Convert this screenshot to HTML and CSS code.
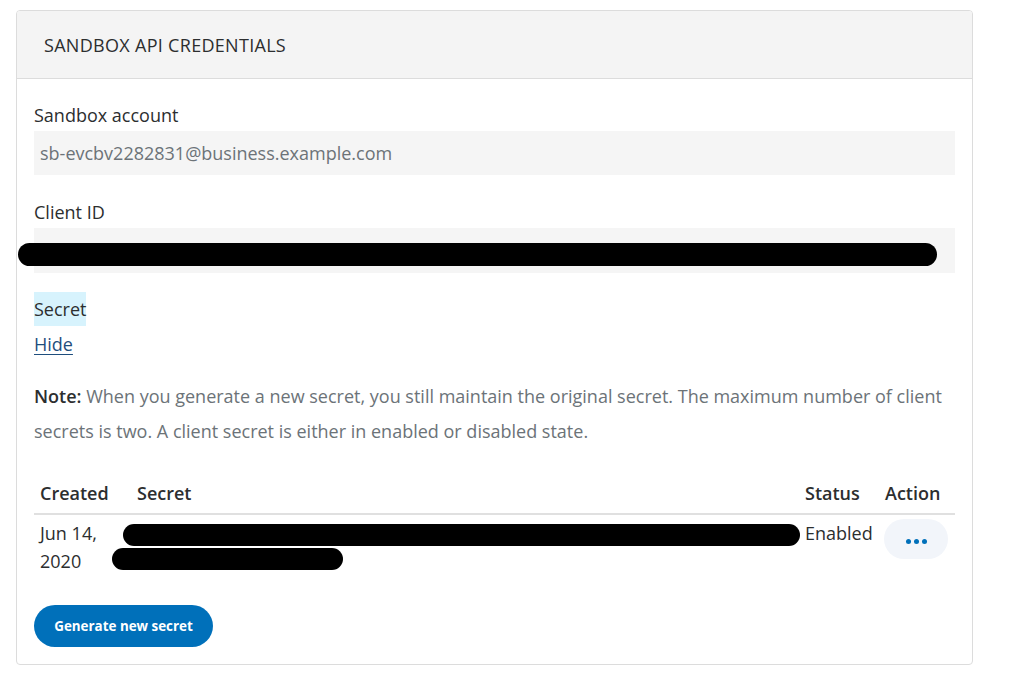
FILE: index.html
```html
<!DOCTYPE html>
<html lang="en">
<head>
<meta charset="utf-8">
<title>Sandbox API Credentials</title>
<link rel="stylesheet" href="styles.css">
</head>
<body>
<section class="card">
  <header class="card-header">SANDBOX API CREDENTIALS</header>
  <div class="card-body">
    <div class="field">
      <div class="label">Sandbox account</div>
      <div class="value">sb-evcbv2282831@business.example.com</div>
    </div>
    <div class="field client-field">
      <div class="label">Client ID</div>
      <div class="value redacted-box">
        <span class="redact redact-client"></span>
      </div>
    </div>
    <div class="field secret-field">
      <div class="label"><span class="label-hl">Secret</span></div>
      <a class="hide-link" href="#">Hide</a>
    </div>
    <p class="note"><strong class="note-lead">Note:</strong><span class="note-text"> When you generate a new secret, you still maintain the original secret. The maximum number of client secrets is two. A client secret is either in enabled or disabled state.</span></p>
    <table class="secrets">
      <thead>
        <tr>
          <th class="c-created">Created</th>
          <th class="c-secret">Secret</th>
          <th class="c-status">Status</th>
          <th class="c-action">Action</th>
        </tr>
      </thead>
      <tbody>
        <tr>
          <td class="c-created">Jun 14,<br>2020</td>
          <td class="c-secret"><span class="redact redact-s1"></span><span class="redact redact-s2"></span></td>
          <td class="c-status">Enabled</td>
          <td class="c-action"><button class="more" type="button" aria-label="More actions"><span class="dot"></span><span class="dot"></span><span class="dot"></span></button></td>
        </tr>
      </tbody>
    </table>
    <button class="primary" type="button">Generate new secret</button>
  </div>
</section>
</body>
</html>
```
FILE: styles.css
```css
html, body {
  margin: 0;
  padding: 0;
  background: #ffffff;
}
body {
  font-family: "Open Sans", "Liberation Sans", sans-serif;
  color: #2c2e2f;
  padding: 10px 0 0 16px;
}
.card {
  width: 957px;
  height: 655px;
  box-sizing: border-box;
  border: 1px solid #dcdcdc;
  border-radius: 4px;
  overflow: hidden;
}
.card-header {
  height: 68px;
  box-sizing: border-box;
  background: #f4f4f4;
  border-bottom: 1px solid #dcdcdc;
  padding-left: 27px;
  display: flex;
  align-items: center;
  font-size: 18px;
  letter-spacing: 0.3px;
  color: #2c2e2f;
}
.card-body {
  padding: 22px 17px 0 17px;
}
.field {
  margin: 0;
}
.client-field {
  margin-top: 23px;
}
.secret-field {
  margin-top: 19px;
}
.label {
  font-size: 18px;
  line-height: 28px;
  margin-bottom: 2px;
}
.value {
  height: 44px;
  background: #f5f5f5;
  font-size: 18px;
  line-height: 44px;
  padding-left: 6px;
  color: #6c7378;
}
.redacted-box {
  position: relative;
  height: 45px;
}
.redact {
  position: absolute;
  background: #000;
  border-radius: 12px;
  height: 23px;
}
.redact-client {
  left: -16px;
  top: 15px;
  width: 919px;
}
.secret-field .label {
  line-height: 34px;
  margin-bottom: 6px;
}
.label-hl {
  display: inline-block;
  background: #d7f3fd;
  line-height: 34px;
}
.hide-link {
  display: inline-block;
  font-size: 18px;
  line-height: 24px;
  color: #1f4e7d;
  text-decoration: underline;
  text-underline-offset: 3px;
}
.note {
  margin: 23px 0 0;
  font-size: 18px;
  line-height: 35px;
  color: #6c7378;
}
.note-lead {
  color: #2c2e2f;
  font-weight: 600;
}
.secrets {
  width: 921px;
  margin-top: 24px;
  border-collapse: collapse;
  font-size: 18px;
}
.secrets th {
  text-align: left;
  font-weight: 600;
  height: 40px;
  vertical-align: middle;
  padding: 0;
  border-bottom: 2px solid #e0e0e0;
}
.secrets td {
  padding: 4px 0 0;
  vertical-align: top;
  line-height: 28px;
  color: #2c2e2f;
}
.c-created {
  width: 97px;
  padding-left: 6px !important;
}
.c-secret {
  position: relative;
}
.c-status {
  width: 80px;
}
.c-action {
  width: 70px;
}
td.c-created {
  height: 60px;
}
.redact-s1 {
  left: -14px;
  top: 9px;
  width: 677px;
  height: 22px;
}
.redact-s2 {
  left: -25px;
  top: 33px;
  width: 231px;
  height: 22px;
}
.more {
  width: 64px;
  height: 40px;
  border: none;
  border-radius: 20px;
  background: #f2f5fa;
  display: flex;
  align-items: center;
  justify-content: center;
  gap: 3px;
  padding: 0;
  margin-top: 0;
  margin-left: -1px;
  cursor: pointer;
}
.dot {
  width: 5px;
  height: 5px;
  border-radius: 50%;
  background: #0070ba;
  margin-top: 4px;
}
.primary {
  margin-top: 26px;
  width: 179px;
  height: 42px;
  border: none;
  border-radius: 21px;
  background: #0070ba;
  color: #ffffff;
  font-family: "Open Sans", "Liberation Sans", sans-serif;
  font-weight: 700;
  font-size: 13.4px;
  padding: 0;
  cursor: pointer;
}
```
